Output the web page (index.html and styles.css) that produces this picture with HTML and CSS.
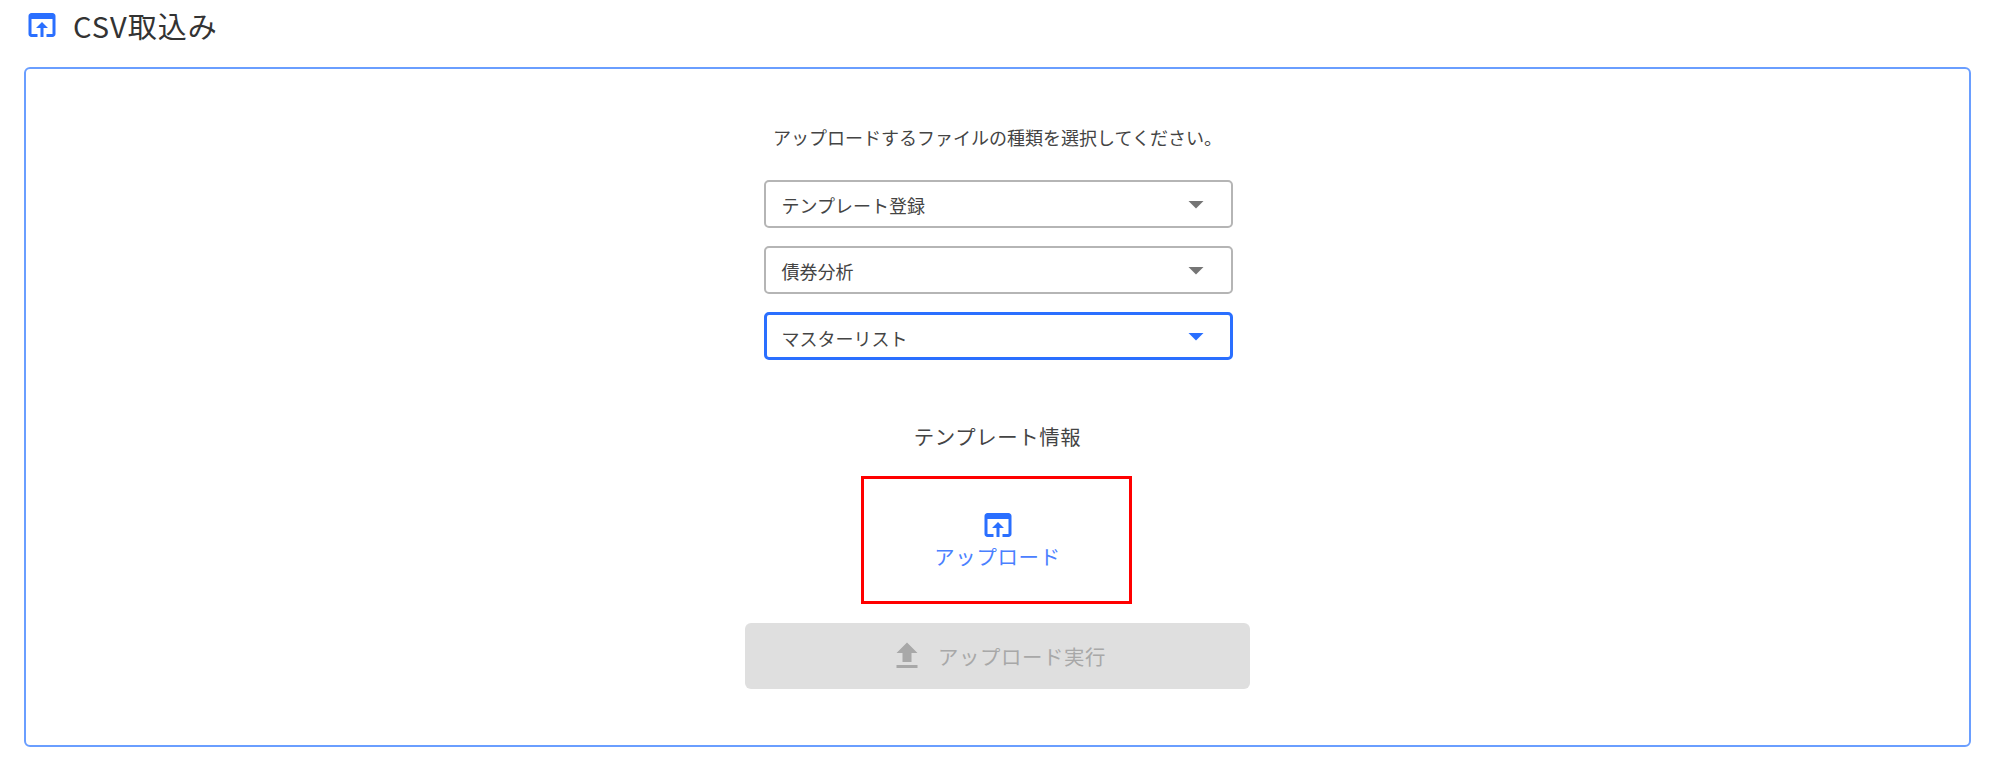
FILE: index.html
```html
<!DOCTYPE html>
<html lang="ja">
<head>
    <meta charset="utf-8">
    <title>CSV取込み</title>
    <link rel="stylesheet" href="styles.css">
</head>
<body>
    <header class="page-title">
        <svg class="icon-open" viewBox="0 0 24 24"><path d="M19 4H5c-1.11 0-2 .9-2 2v12c0 1.1.89 2 2 2h4v-2H5V8h14v10h-4v2h4c1.1 0 2-.9 2-2V6c0-1.1-.89-2-2-2zm-7 6l-4 4h3v6h2v-6h3l-4-4z"/></svg>
        <h1>CSV取込み</h1>
    </header>

    <main class="card">
        <p class="lead">アップロードするファイルの種類を選択してください。</p>

        <div class="selects">
            <div class="select">
                <span>テンプレート登録</span>
                <svg class="arrow" viewBox="0 0 24 24"><path d="M7 10l5 5 5-5z"/></svg>
            </div>
            <div class="select">
                <span>債券分析</span>
                <svg class="arrow" viewBox="0 0 24 24"><path d="M7 10l5 5 5-5z"/></svg>
            </div>
            <div class="select focused">
                <span>マスターリスト</span>
                <svg class="arrow" viewBox="0 0 24 24"><path d="M7 10l5 5 5-5z"/></svg>
            </div>
        </div>

        <h2 class="section-title">テンプレート情報</h2>

        <button class="upload-box">
            <svg class="icon-open" viewBox="0 0 24 24"><path d="M19 4H5c-1.11 0-2 .9-2 2v12c0 1.1.89 2 2 2h4v-2H5V8h14v10h-4v2h4c1.1 0 2-.9 2-2V6c0-1.1-.89-2-2-2zm-7 6l-4 4h3v6h2v-6h3l-4-4z"/></svg>
            <span>アップロード</span>
        </button>

        <button class="run-button" disabled>
            <svg class="icon-upload" viewBox="0 0 24 24"><path d="M9 16h6v-6h4l-7-7-7 7h4zm-4 2h14v2H5z"/></svg>
            <span>アップロード実行</span>
        </button>
    </main>
</body>
</html>
```

FILE: styles.css
```css
body {
    margin: 0;
    background: #fff;
    color: #333;
    font-family: "Noto Sans CJK JP", "Noto Sans", sans-serif;
}
button {
    font-family: inherit;
}
.page-title {
    display: flex;
    align-items: center;
    gap: 13px;
    height: 36px;
    padding: 7px 0 0 24px;
}
.page-title h1 {
    margin: 0;
    font-size: 29px;
    font-weight: 400;
    line-height: 36px;
    letter-spacing: 1px;
}
.icon-open {
    display: block;
    width: 36px;
    height: 36px;
    fill: #2a6fff;
}
.card {
    display: flex;
    flex-direction: column;
    align-items: center;
    box-sizing: border-box;
    width: 1947px;
    height: 680px;
    margin: 24px 0 0 24px;
    padding-top: 56px;
    border: 2px solid #6a9eff;
    border-radius: 6px;
}
.lead {
    margin: 0;
    font-size: 18px;
    line-height: 24px;
    color: #444;
}
.selects {
    display: flex;
    flex-direction: column;
    gap: 18px;
    margin: 31px 0 0 1px;
}
.select {
    display: flex;
    align-items: center;
    justify-content: space-between;
    box-sizing: border-box;
    width: 469px;
    height: 48px;
    padding: 0 26px 0 16px;
    border: 2px solid #b5b5b5;
    border-radius: 5px;
    font-size: 18px;
    color: #444;
}
.select span {
    padding-top: 2px;
}
.select.focused {
    border: 3px solid #2a6fff;
    padding: 0 25px 0 15px;
}
.focused span {
    padding-top: 4px;
}
.arrow {
    width: 36px;
    height: 36px;
    margin-right: -9px;
    fill: #757575;
}
.focused .arrow {
    fill: #2a6fff;
}
.section-title {
    margin: 61px 0 0;
    font-size: 20.4px;
    font-weight: 400;
    line-height: 30px;
    letter-spacing: 0.6px;
    color: #444;
}
.upload-box {
    display: flex;
    flex-direction: column;
    align-items: center;
    justify-content: center;
    box-sizing: border-box;
    width: 271px;
    height: 128px;
    margin: 25px 2px 0 0;
    padding: 0 0 4px 2px;
    background: #fff;
    border: 3px solid #f00;
    font-size: 20.4px;
    line-height: 26px;
    letter-spacing: 0.7px;
    color: #4a80ff;
}
.run-button {
    display: flex;
    align-items: center;
    justify-content: center;
    gap: 13px;
    width: 505px;
    height: 66px;
    margin-top: 19px;
    padding: 0;
    background: #dfdfdf;
    border: 0;
    border-radius: 6px;
    font-size: 20.4px;
    letter-spacing: 0.6px;
    color: #a8a8a8;
}
.icon-upload {
    width: 36px;
    height: 36px;
    fill: #a8a8a8;
}
```
